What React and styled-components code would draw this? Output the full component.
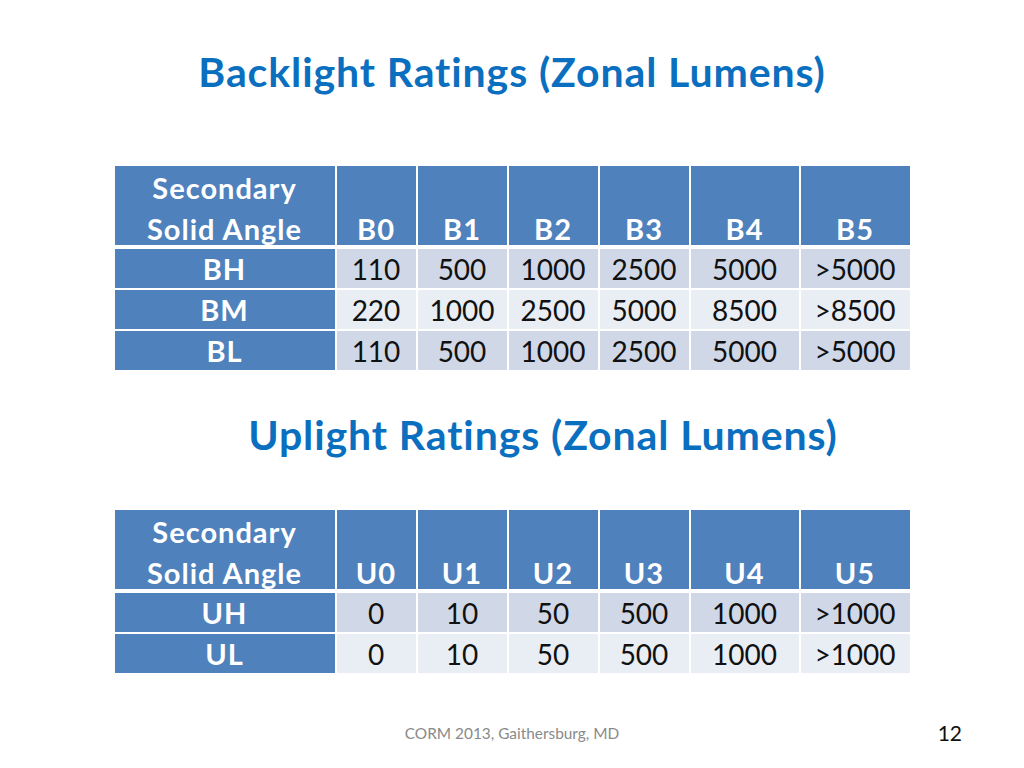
import React from "react"
import styled, { createGlobalStyle } from "styled-components"

const GlobalStyle = createGlobalStyle`
  html, body {
    margin: 0;
    padding: 0;
    background: #fff;
  }
  body {
    font-family: Lato, "Open Sans", "Liberation Sans", sans-serif;
  }
`

const backlight = {
  title: "Backlight Ratings (Zonal Lumens)",
  heads: ["B0", "B1", "B2", "B3", "B4", "B5"],
  rows: [
    ["BH", "110", "500", "1000", "2500", "5000", ">5000"],
    ["BM", "220", "1000", "2500", "5000", "8500", ">8500"],
    ["BL", "110", "500", "1000", "2500", "5000", ">5000"]
  ]
}

const uplight = {
  title: "Uplight Ratings (Zonal Lumens)",
  heads: ["U0", "U1", "U2", "U3", "U4", "U5"],
  rows: [
    ["UH", "0", "10", "50", "500", "1000", ">1000"],
    ["UL", "0", "10", "50", "500", "1000", ">1000"]
  ]
}

const Slide = styled.div`
  width: 1024px;
  height: 768px;
  display: flex;
  flex-direction: column;
  align-items: center;
  overflow: hidden;
`

const Title = styled.h1`
  margin: ${props => props.top || 0}px 0 0 ${props => props.shift || 0}px;
  font-size: 41px;
  line-height: 48px;
  font-weight: 700;
  color: #0b6fc0;
  letter-spacing: 0.9px;
  white-space: nowrap;
`

const Grid = styled.div`
  margin-top: ${props => props.top || 0}px;
  display: grid;
  grid-template-columns: 220px 79px 89px 89px 89px 108px 109px;
  grid-template-rows: 81px;
  grid-auto-rows: 39px;
  column-gap: 2px;
  row-gap: 2px;
`

const HeadCell = styled.div`
  height: 79px;
  align-self: start;
  background: #4f81bd;
  color: #fff;
  font-weight: 700;
  font-size: 29px;
  line-height: 41px;
  letter-spacing: 1px;
  text-align: center;
  display: flex;
  flex-direction: column;
  padding-top: ${props => (props.tall ? 1 : 42)}px;
  box-sizing: border-box;
  white-space: nowrap;
  overflow: hidden;
`

const RowHead = styled.div`
  background: #4f81bd;
  color: #fff;
  font-weight: 700;
  font-size: 29px;
  letter-spacing: 1px;
  display: flex;
  align-items: center;
  justify-content: center;
`

const Cell = styled.div`
  background: ${props => (props.odd ? "#e9edf4" : "#d0d8e8")};
  color: #111;
  font-size: 28px;
  display: flex;
  align-items: center;
  justify-content: center;
`

const Footer = styled.div`
  margin-top: auto;
  margin-bottom: 23px;
  width: 100%;
  display: grid;
  grid-template-columns: 1fr auto 1fr;
  align-items: center;
  padding: 0 62px;
  box-sizing: border-box;
`

const FootNote = styled.div`
  grid-column: 2;
  font-size: 15.4px;
  color: #8a8a8a;
`

const PageNo = styled.div`
  justify-self: end;
  font-size: 21px;
  color: #111;
`

function Ratings({ data, top }) {
  return (
    <Grid top={top}>
      <HeadCell tall>
        <span>Secondary</span>
        <span>Solid Angle</span>
      </HeadCell>
      {data.heads.map(h => (
        <HeadCell key={h}>{h}</HeadCell>
      ))}
      {data.rows.map((row, i) =>
        row.map((v, j) =>
          j === 0 ? (
            <RowHead key={i + "-" + j}>{v}</RowHead>
          ) : (
            <Cell key={i + "-" + j} odd={i % 2 === 1}>
              {v}
            </Cell>
          )
        )
      )}
    </Grid>
  )
}

export default function App() {
  return (
    <>
      <GlobalStyle />
      <Slide>
        <Title top={48}>{backlight.title}</Title>
        <Ratings data={backlight} top={70} />
        <Title top={41} shift={62}>
          {uplight.title}
        </Title>
        <Ratings data={uplight} top={51} />
        <Footer>
          <FootNote>CORM 2013, Gaithersburg, MD</FootNote>
          <PageNo>12</PageNo>
        </Footer>
      </Slide>
    </>
  )
}
